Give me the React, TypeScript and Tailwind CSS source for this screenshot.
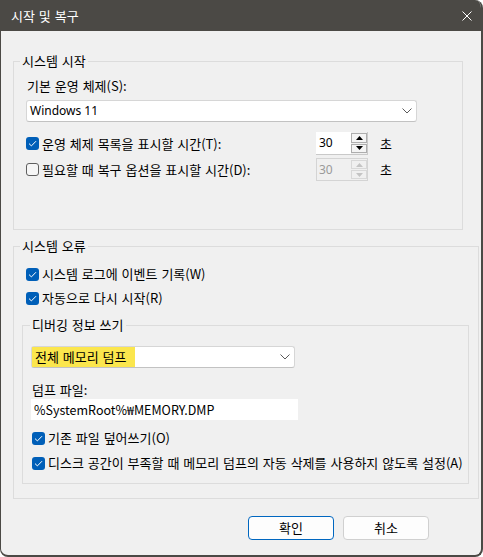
import React from "react";

function Check({ checked }: { checked: boolean }) {
  return checked ? (
    <span className="flex h-[13px] w-[13px] shrink-0 items-center justify-center rounded-[3px] bg-[#005fb8]">
      <svg width="9" height="7" viewBox="0 0 9 7">
        <path d="M1 3.6 L3.4 5.9 L8 1.2" fill="none" stroke="white" strokeWidth="1" />
      </svg>
    </span>
  ) : (
    <span className="h-[13px] w-[13px] shrink-0 rounded-[3px] border border-[#5f5f5f] bg-[#f6f6f6]" />
  );
}

function Chevron() {
  return (
    <svg width="10" height="6" viewBox="0 0 10 6">
      <path d="M0.5 0.5 L5 5 L9.5 0.5" fill="none" stroke="#5a5a5a" strokeWidth="1" />
    </svg>
  );
}

function Spinner({ disabled }: { disabled?: boolean }) {
  const arrow = disabled ? "#c4c4c4" : "#000000";
  return (
    <div
      className={
        disabled
          ? "flex h-[23px] w-[52px] border border-[#d4d4d4] bg-[#f0f0f0]"
          : "flex h-[23px] w-[52px] border-b border-r border-[#c9c9c9] bg-white"
      }
    >
      <div
        className={
          disabled
            ? "flex flex-1 items-center pl-[2px] font-['Noto_Sans',sans-serif] text-[12px] text-[#9a9a9a]"
            : "flex flex-1 items-center pl-[3px] font-['Noto_Sans',sans-serif] text-[12px] text-black"
        }
      >
        30
      </div>
      <div className="flex w-[16px] flex-col gap-[1px] bg-[#f0f0f0] py-[1px]">
        <div className={disabled ? "flex flex-1 items-center justify-center border border-[#d8d8d8]" : "flex flex-1 items-center justify-center border border-[#adadad] bg-[#f4f4f4]"}>
          <svg width="7" height="4" viewBox="0 0 7 4">
            <path d="M0 4 L3.5 0 L7 4 Z" fill={arrow} />
          </svg>
        </div>
        <div className={disabled ? "flex flex-1 items-center justify-center border border-[#d8d8d8]" : "flex flex-1 items-center justify-center border border-[#adadad] bg-[#f4f4f4]"}>
          <svg width="7" height="4" viewBox="0 0 7 4">
            <path d="M0 0 L3.5 4 L7 0 Z" fill={arrow} />
          </svg>
        </div>
      </div>
    </div>
  );
}

export default function App() {
  return (
    <div className="h-[557px] w-[483px] bg-white font-['Noto_Sans_CJK_KR',sans-serif] text-[13px] leading-4 text-black [word-spacing:1px]">
      <div className="flex h-full flex-col overflow-hidden rounded-b-[8px] rounded-tr-[8px] border-b-2 border-l border-r-2 border-[#4b4945] bg-[#f0f0f0]">
        {/* Title bar */}
        <div className="flex h-[31px] shrink-0 items-center justify-between bg-[#4b4945] pl-[10px] pr-[9px] text-white">
          <span>시작 및 복구</span>
          <svg width="10" height="10" viewBox="0 0 10 10">
            <path d="M0.5 0.5 L9.5 9.5 M9.5 0.5 L0.5 9.5" stroke="white" strokeWidth="1" />
          </svg>
        </div>

        {/* Group 1 */}
        <fieldset className="ml-[12px] mt-[22px] w-[450px] border border-[#dcdcdc]">
          <legend className="ml-[6px] px-[2px] leading-4">시스템 시작</legend>
          <div className="flex flex-col pb-[48px] pl-[12px] pt-[9px]">
            <div className="pl-[1px]">기본 운영 체제(S):</div>
            <div className="mt-[6px] flex h-[22px] w-[391px] items-center justify-between rounded-[3px] border border-[#d6d6d6] border-b-[#c2c2c2] bg-white pl-[3px] pr-[4px]">
              <span className="font-['Noto_Sans',sans-serif] text-[12px] [word-spacing:0px]">Windows 11</span>
              <Chevron />
            </div>
            <div className="mt-[10px] flex items-center">
              <Check checked />
              <span className="ml-[3px] w-[274px]">운영 체제 목록을 표시할 시간(T):</span>
              <Spinner />
              <span className="ml-[12px]">초</span>
            </div>
            <div className="mt-[3px] flex items-center">
              <Check checked={false} />
              <span className="ml-[3px] w-[274px]">필요할 때 복구 옵션을 표시할 시간(D):</span>
              <Spinner disabled />
              <span className="ml-[12px]">초</span>
            </div>
          </div>
        </fieldset>

        {/* Group 2 */}
        <fieldset className="ml-[12px] mt-[8px] w-[466px] border border-[#dcdcdc]">
          <legend className="ml-[6px] px-[2px] leading-4">시스템 오류</legend>
          <div className="flex flex-col pb-[14px] pl-[8px] pt-[12px]">
            <div className="ml-[4px] flex items-center">
              <Check checked />
              <span className="ml-[3px]">시스템 로그에 이벤트 기록(W)</span>
            </div>
            <div className="ml-[4px] mt-[8px] flex items-center">
              <Check checked />
              <span className="ml-[3px]">자동으로 다시 시작(R)</span>
            </div>

            <fieldset className="mt-[11px] w-[447px] border border-[#dcdcdc]">
              <legend className="ml-[7px] px-[2px] leading-4">디버깅 정보 쓰기</legend>
              <div className="flex flex-col pb-[12px] pl-[8px] pt-[13px]">
                <div className="flex h-[22px] w-[264px] items-center justify-between rounded-[3px] border border-[#d6d6d6] border-b-[#c2c2c2] bg-white pr-[4px]">
                  <span className="flex h-full w-[103px] items-center bg-[#fbe64d] pl-[3px]">전체 메모리 덤프</span>
                  <Chevron />
                </div>
                <div className="mt-[14px] pl-[1px]">덤프 파일:</div>
                <div className="mt-[1px] flex h-[21px] w-[267px] items-center bg-white pl-[3px] text-[12.5px]">
                  %SystemRoot%₩MEMORY.DMP
                </div>
                <div className="ml-[1px] mt-[10px] flex items-center">
                  <Check checked />
                  <span className="ml-[3px]">기존 파일 덮어쓰기(O)</span>
                </div>
                <div className="ml-[1px] mt-[9px] flex items-center">
                  <Check checked />
                  <span className="ml-[3px]">디스크 공간이 부족할 때 메모리 덤프의 자동 삭제를 사용하지 않도록 설정(A)</span>
                </div>
              </div>
            </fieldset>
          </div>
        </fieldset>

        {/* Buttons */}
        <div className="mt-[17px] flex justify-end gap-[9px] pr-[52px]">
          <button className="flex h-[24px] w-[86px] items-center justify-center rounded-[4px] border border-[#0067c0] bg-[#fdfdfd]">
            확인
          </button>
          <button className="flex h-[24px] w-[86px] items-center justify-center rounded-[4px] border border-[#d0d0d0] bg-[#fdfdfd]">
            취소
          </button>
        </div>
      </div>
    </div>
  );
}
